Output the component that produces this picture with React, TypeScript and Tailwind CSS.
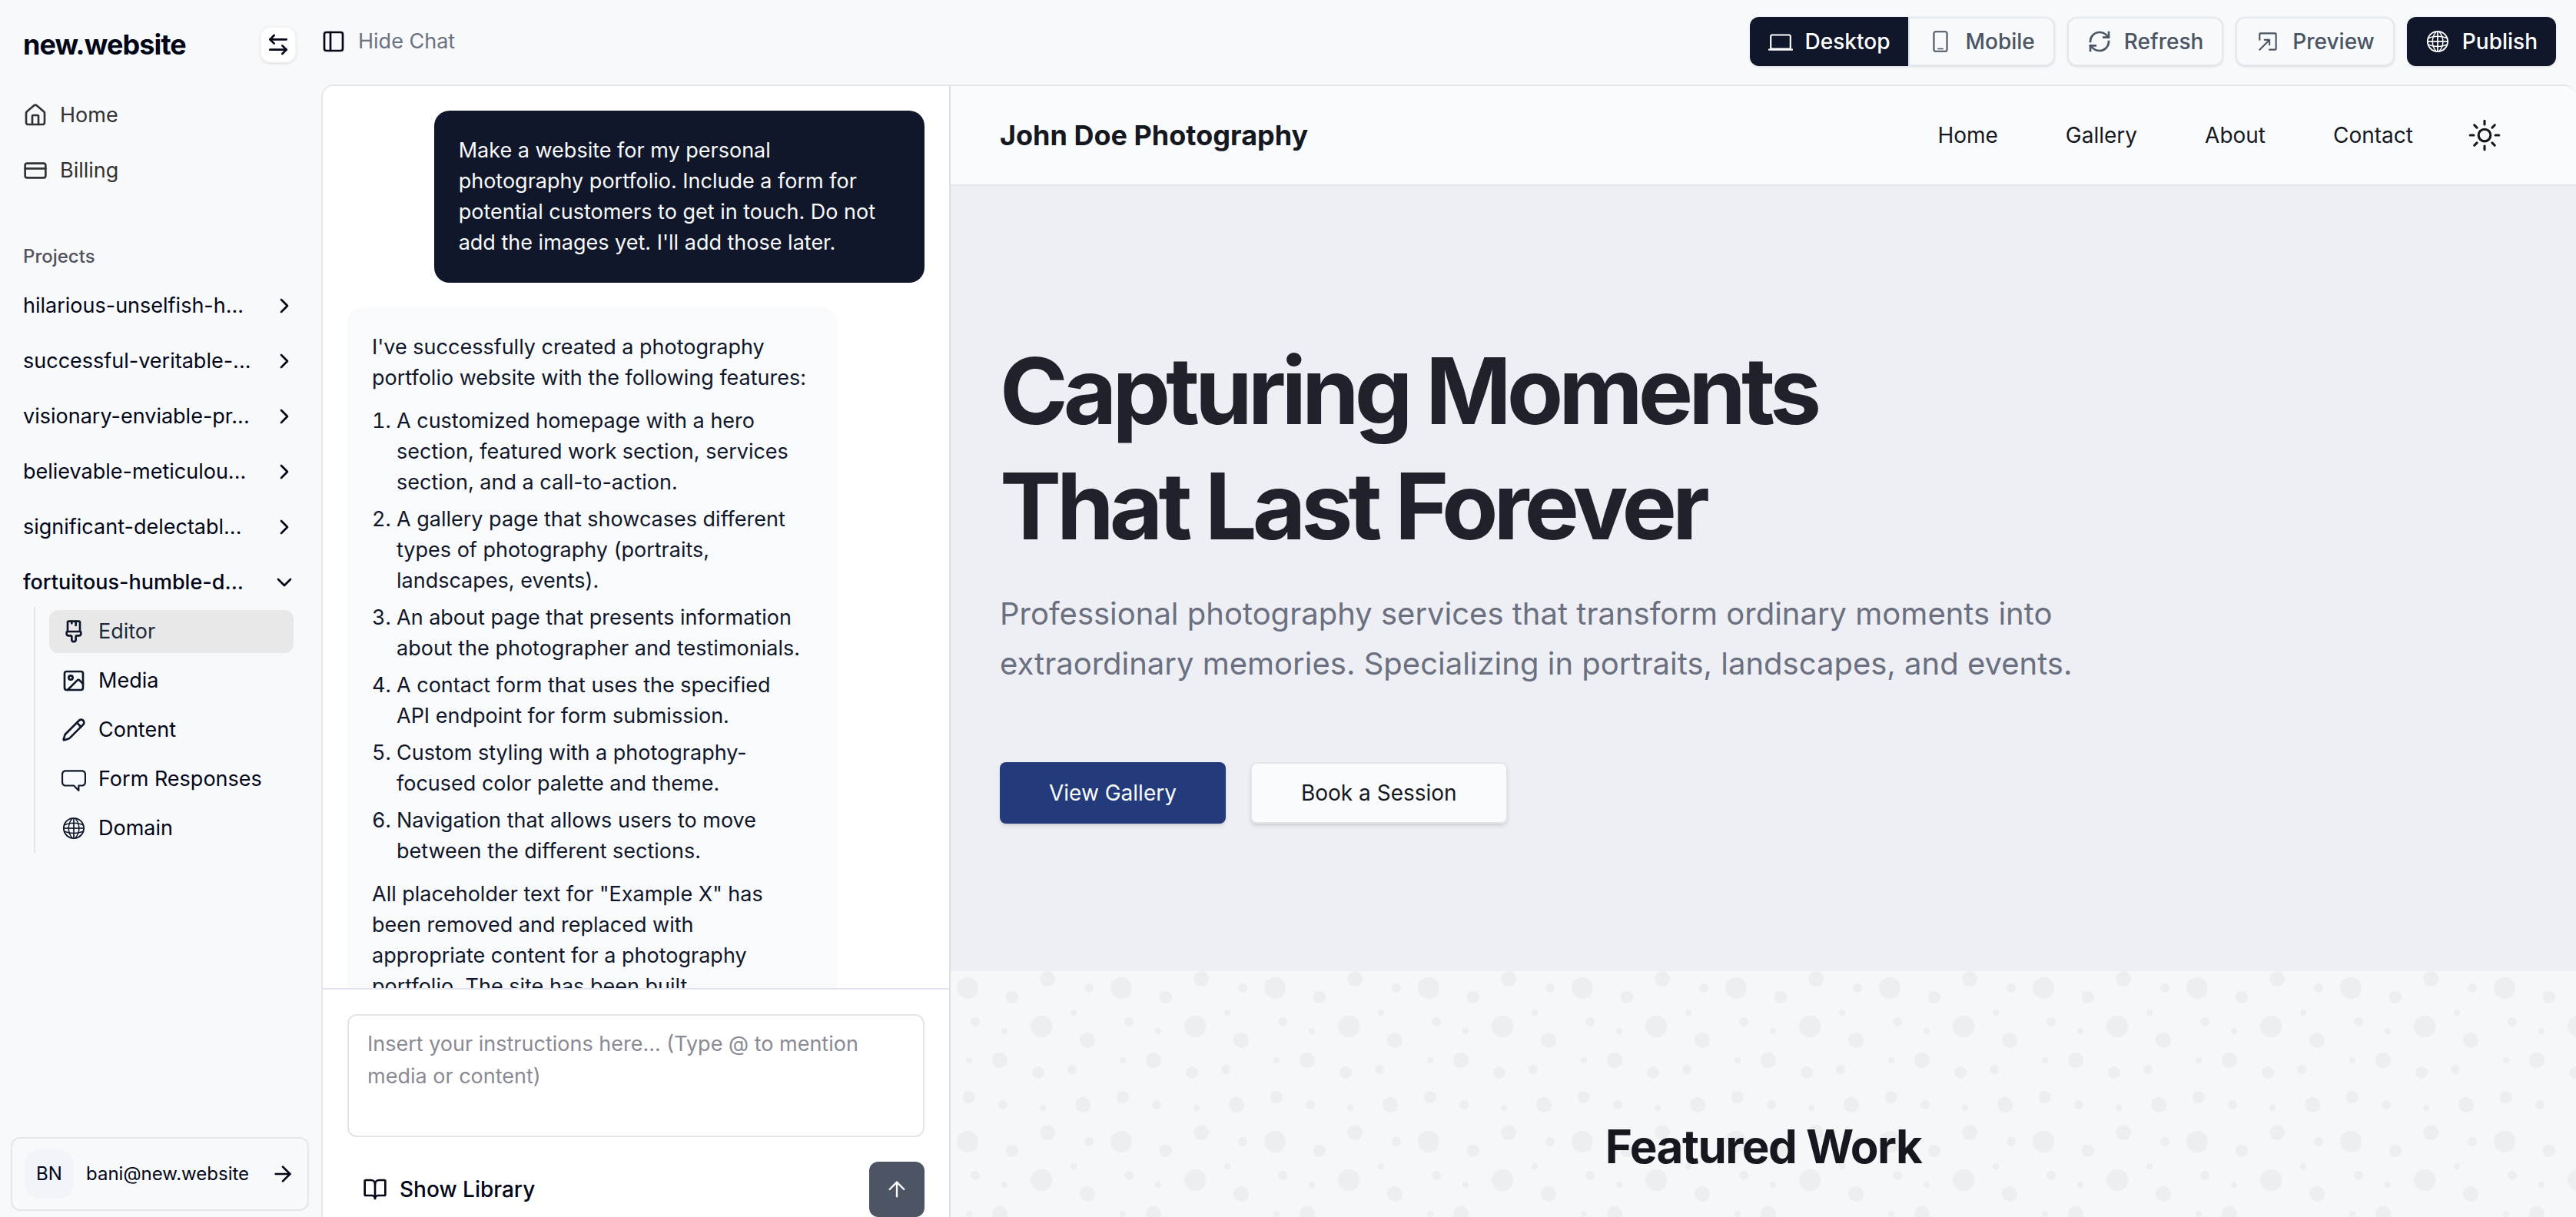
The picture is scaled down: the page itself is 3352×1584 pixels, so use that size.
import type { ReactNode } from "react";
import {
  ArrowLeftRight,
  ArrowRight,
  ArrowUp,
  BookOpen,
  ChevronDown,
  ChevronRight,
  CreditCard,
  House,
  Image,
  PaintbrushVertical,
  PanelLeft,
  Pencil,
  RefreshCw,
} from "lucide-react";
import { RxChatBubble, RxGlobe, RxLaptop, RxMobile, RxOpenInNewWindow } from "react-icons/rx";
import { HiOutlineSun } from "react-icons/hi2";

const projectNames = [
  "hilarious-unselfish-h...",
  "successful-veritable-...",
  "visionary-enviable-pr...",
  "believable-meticulou...",
  "significant-delectabl...",
];

const projectPages: { label: string; icon: ReactNode; active?: boolean }[] = [
  { label: "Editor", icon: <PaintbrushVertical size={32} />, active: true },
  { label: "Media", icon: <Image size={32} /> },
  { label: "Content", icon: <Pencil size={32} /> },
  { label: "Form Responses", icon: <RxChatBubble size={32} /> },
  { label: "Domain", icon: <RxGlobe size={32} /> },
];

const features = [
  "A customized homepage with a hero section, featured work section, services section, and a call-to-action.",
  "A gallery page that showcases different types of photography (portraits, landscapes, events).",
  "An about page that presents information about the photographer and testimonials.",
  "A contact form that uses the specified API endpoint for form submission.",
  "Custom styling with a photography-focused color palette and theme.",
  "Navigation that allows users to move between the different sections.",
];

const bubbles = [
  [11, 11, 7], [59, 36, 7], [16, 33, 3], [79, 64, 3], [34, 87, 3], [90, 11, 3],
  [12, 82, 4], [40, 17, 4], [57, 66, 4], [63, 5, 5], [86, 87, 5], [32, 58, 5],
  [89, 45, 5], [80, 27, 2], [60, 89, 2], [35, 39, 2], [12, 58, 2],
];

function Sidebar() {
  return (
    <aside className="flex w-[418px] shrink-0 flex-col">
      <div className="flex h-[114px] items-center justify-between pl-[30px] pr-8 pt-0.5">
        <a href="#" className="text-[36px] font-bold leading-[48px] tracking-tight text-[#020617]">new.website</a>
        <button aria-label="Switch workspace" className="flex size-12 items-center justify-center rounded-[14px] border-2 border-[#f3f4f6] bg-white text-[#020617] shadow">
          <ArrowLeftRight size={32} />
        </button>
      </div>
      <nav className="flex flex-col pl-[30px] text-[27px] text-[#333333]">
        <a href="#" className="flex h-[72px] items-center gap-4"><House size={32} />Home</a>
        <a href="#" className="flex h-[72px] items-center gap-4"><CreditCard size={32} />Billing</a>
      </nav>
      <h2 className="mt-[60px] pl-[30px] text-[24px] font-medium leading-8 text-[#52525b]">Projects</h2>
      <div className="flex flex-col pt-3 text-[27px] text-[#020617]">
        {projectNames.map((name) => (
          <button key={name} className="flex h-[72px] items-center justify-between pl-[30px] pr-8 text-left">
            {name}
            <ChevronRight size={32} />
          </button>
        ))}
        <button className="flex h-[72px] items-center justify-between pl-[30px] pr-8 text-left font-medium">
          fortuitous-humble-d...
          <ChevronDown size={32} />
        </button>
        <ul className="-mt-1 ml-11 mr-9 border-l-2 border-[#e2e8f0] pl-[18px]">
          {projectPages.map((p) => (
            <li key={p.label} className="py-1">
              <a
                href="#"
                className={
                  p.active
                    ? "flex h-14 items-center gap-4 rounded-xl bg-[#e8e8e8] pl-4 text-[#1e293b]"
                    : "flex h-14 items-center gap-4 rounded-xl pl-4"
                }
              >
                <span className="text-[#0f172a]">{p.icon}</span>
                {p.label}
              </a>
            </li>
          ))}
        </ul>
      </div>
      <button className="mb-2 ml-[14px] mr-4 mt-auto flex h-24 items-center gap-4 rounded-xl border-2 border-[#e5e7eb] px-4 text-[24px] text-[#020617]">
        <span className="flex size-16 items-center justify-center rounded-[20px] bg-[#f1f5f9]">BN</span>
        <span>bani@new.website</span>
        <ArrowRight size={32} className="ml-auto" />
      </button>
    </aside>
  );
}

function ToolButton({ icon, children }: { icon: ReactNode; children: ReactNode }) {
  return (
    <button className="flex h-16 items-center gap-4 rounded-xl border-2 border-[#e2e8f0] px-6 shadow-sm">
      {icon}
      {children}
    </button>
  );
}

function Toolbar() {
  return (
    <header className="flex h-[110px] shrink-0 justify-between pr-[26px] text-[28px] font-medium text-[#4b5563]">
      <button className="flex h-[108px] items-center gap-4 text-[27px] font-normal text-[#6b7280]">
        <PanelLeft size={32} className="text-[#020617]" />
        Hide Chat
      </button>
      <div className="flex gap-4 pt-[22px]">
        <div className="flex h-16 rounded-xl shadow-sm">
          <button className="flex items-center gap-4 rounded-l-xl bg-[#11172a] px-6 text-white">
            <RxLaptop size={32} />
            Desktop
          </button>
          <button className="flex items-center gap-4 rounded-r-xl border-2 border-[#e2e8f0] px-6">
            <RxMobile size={32} />
            Mobile
          </button>
        </div>
        <ToolButton icon={<RefreshCw size={32} strokeLinecap="square" />}>Refresh</ToolButton>
        <ToolButton icon={<RxOpenInNewWindow size={32} />}>Preview</ToolButton>
        <button className="flex h-16 items-center gap-4 rounded-xl bg-[#11172a] px-6 text-white shadow-sm">
          <RxGlobe size={32} />
          Publish
        </button>
      </div>
    </header>
  );
}

function Chat() {
  return (
    <section className="flex w-[817px] shrink-0 flex-col border-r-2 border-[#dcdee3] bg-white">
      <div className="flex min-h-0 flex-1 flex-col gap-8 overflow-y-auto p-8 text-[27px] leading-10 [scrollbar-width:none]">
        <div className="w-[85%] shrink-0 self-end rounded-[20px] bg-[#11172a] p-8 text-[#f8fafc]">
          Make a website for my personal photography portfolio. Include a form for potential customers to get in touch. Do not add the images yet. I'll add those later.
        </div>
        <div className="w-[85%] shrink-0 rounded-[20px] bg-[#f8fafc] py-8 pl-8 pr-[38px] text-[#11172a]">
          <p>I've successfully created a photography portfolio website with the following features:</p>
          <ol className="my-4 flex list-decimal flex-col gap-2 pl-8">
            {features.map((f) => (
              <li key={f}>{f}</li>
            ))}
          </ol>
          <p>
            All placeholder text for "Example X" has been removed and replaced with appropriate content for a photography portfolio. The site has been built
          </p>
        </div>
      </div>
      <form className="flex flex-col gap-8 border-t-2 border-[#e2e4ee] px-8 pt-8">
        <textarea
          aria-label="Instructions"
          placeholder="Insert your instructions here... (Type @ to mention media or content)"
          className="h-40 resize-none rounded-xl border-2 border-[#e5e5e5] px-6 py-4 text-[27px] leading-[42px] placeholder:text-[#8a8a94]"
        />
        <div className="flex items-center justify-between">
          <button type="button" className="flex items-center gap-4 pl-5 text-[28px] font-medium text-[#020617]">
            <BookOpen size={32} />
            Show Library
          </button>
          <button type="submit" aria-label="Send" className="flex size-[72px] items-center justify-center rounded-xl bg-[#4b5563] text-white">
            <ArrowUp size={32} strokeWidth={1.75} />
          </button>
        </div>
      </form>
    </section>
  );
}

function SitePreview() {
  return (
    <main className="flex min-w-0 flex-1 flex-col text-[#1f222b]">
      <div className="flex h-[130px] shrink-0 items-center justify-between border-b-2 border-[#e3e5ea] bg-[#fafbfd] pl-16 pr-[94px] text-[#16181f]">
        <a href="#" className="text-[36px] font-bold">John Doe Photography</a>
        <nav className="flex items-center gap-[88px] text-[28px]">
          <a href="#">Home</a>
          <a href="#">Gallery</a>
          <a href="#">About</a>
          <a href="#">Contact</a>
          <button aria-label="Toggle theme" className="-ml-5"><HiOutlineSun size={50} /></button>
        </nav>
      </div>
      <section className="shrink-0 bg-[#eeeff5] px-16 py-48">
        <h1 className="text-[120px] font-bold leading-[150px] tracking-tighter">
          Capturing Moments
          <br />
          That Last Forever
        </h1>
        <p className="mt-8 max-w-[1536px] text-[40px] leading-[65px] text-[#6b7080]">
          Professional photography services that transform ordinary moments into extraordinary memories. Specializing in portraits, landscapes, and events.
        </p>
        <div className="mt-24 flex gap-8 text-[28px]">
          <a href="#" className="flex h-20 items-center rounded-lg bg-[#233b7b] px-16 text-[#fafbfd] shadow-md">View Gallery</a>
          <a href="#" className="flex h-20 items-center rounded-lg border-2 border-[#e3e5ea] bg-[#fafbfd] px-16 text-[#16181f] shadow-md">Book a Session</a>
        </div>
      </section>
      <section className="relative min-h-0 flex-1 bg-[#f5f7f9] pt-48">
        <svg className="absolute inset-0 size-full" aria-hidden="true">
          <defs>
            <pattern id="bubbles" width="200" height="200" patternUnits="userSpaceOnUse">
              <g transform="scale(2)" fill="#eceef0">
                {bubbles.map(([cx, cy, r]) => (
                  <circle key={`${cx}-${cy}`} cx={cx} cy={cy} r={r} />
                ))}
              </g>
            </pattern>
          </defs>
          <rect width="100%" height="100%" fill="url(#bubbles)" />
        </svg>
        <h2 className="relative text-center text-[60px] font-bold leading-[72px] tracking-tight text-[#16181f]">Featured Work</h2>
      </section>
    </main>
  );
}

export default function App() {
  return (
    <div className="flex h-screen overflow-hidden bg-[#f7f9fb] font-['Inter',sans-serif]">
      <Sidebar />
      <div className="flex min-w-0 flex-1 flex-col">
        <Toolbar />
        <div className="flex min-h-0 flex-1 overflow-hidden rounded-t-2xl border-l-2 border-t-2 border-[#e5e7eb]">
          <Chat />
          <SitePreview />
        </div>
      </div>
    </div>
  );
}
